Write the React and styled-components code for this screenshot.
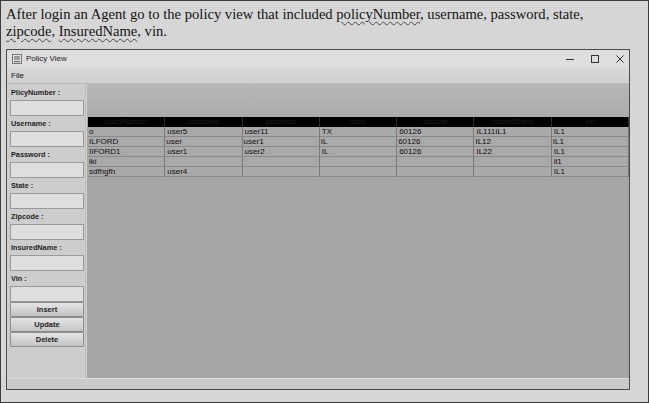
import styled, { createGlobalStyle } from "styled-components"

const GlobalStyle = createGlobalStyle`
  html, body {
    margin: 0;
    padding: 0;
    background: #d5d5d5;
  }
`

const fields = [
  "PlicyNumber :",
  "Username :",
  "Password :",
  "State :",
  "Zipcode :",
  "InsuredName :",
  "Vin :",
]

const columns = ["policyNumber", "username", "password", "state", "zipcode", "InsuredName", "vin"]

const rows = [
  ["o", "user5", "user11", "TX", "60126", "IL111IL1", "IL1"],
  ["ILFORD", "user", "user1", "IL", "60126", "IL12", "IL1"],
  ["IIFORD1", "user1", "user2", "IL", "60126", "IL22", "IL1"],
  ["lki", "", "", "", "", "", "il1"],
  ["sdfhgfh", "user4", "", "", "", "", "IL1"],
]

const Page = styled.div`
  width: 649px;
  height: 403px;
  box-sizing: border-box;
  border: 1px solid #3c3c3c;
  background: #d6d6d6;
  overflow: hidden;
  display: flex;
  flex-direction: column;
`

const Caption = styled.p`
  margin: 0;
  padding: 5px 0 0 5px;
  height: 48px;
  box-sizing: border-box;
  font-family: "Liberation Serif", serif;
  font-size: 14.6px;
  line-height: 17px;
  color: #141414;
  white-space: nowrap;
`

const Spell = styled.span`
  text-decoration: underline wavy #4a4a4a;
  text-decoration-thickness: 1px;
  text-underline-offset: 2px;
`

const Window = styled.div`
  margin-left: 5px;
  width: 624px;
  height: 341px;
  box-sizing: border-box;
  border: 1px solid #4a4a4a;
  background: #d2d2d2;
  display: flex;
  flex-direction: column;
  font-family: "Liberation Sans", Arial, sans-serif;
`

const TitleBar = styled.div`
  height: 17px;
  display: flex;
  align-items: center;
  gap: 12px;
  padding: 0 3px 0 5px;
  background: #dedede;
  font-size: 8px;
  color: #222;
`

const AppIcon = styled.svg`
  width: 10px;
  height: 10px;
  margin-right: -8px;
`

const WinTitle = styled.span`
  flex: 1;
`

const WinButton = styled.div`
  width: 13px;
  height: 17px;
  display: flex;
  align-items: center;
  justify-content: center;
`

const MenuBar = styled.div`
  height: 17px;
  display: flex;
  align-items: center;
  padding-left: 4px;
  font-size: 8px;
  color: #111;
  background: linear-gradient(#dadada, #cfcfcf);
  border-bottom: 1px solid #bdbdbd;
  box-sizing: border-box;
`

const Body = styled.div`
  flex: 1;
  display: flex;
  flex-direction: column;
`

const Main = styled.div`
  flex: 1;
  display: flex;
  gap: 1px;
`

const FormPanel = styled.div`
  width: 79px;
  box-sizing: border-box;
  padding: 1px 1px 0 3px;
  background: #cdcdcd;
  border-right: 1px solid #bcbcbc;
  display: flex;
  flex-direction: column;
`

const Label = styled.div`
  height: 15px;
  display: flex;
  align-items: center;
  padding-left: 1px;
  font-size: 7.3px;
  font-weight: bold;
  color: #1e1e1e;
`

const Input = styled.div`
  height: 16px;
  width: 74px;
  box-sizing: border-box;
  border: 1px solid #9a9a9a;
  background: #dedede;
`

const Button = styled.div`
  height: 15px;
  width: 74px;
  box-sizing: border-box;
  border: 1px solid #8c8c8c;
  border-radius: 1px;
  background: linear-gradient(#e4e4e4, #c4c4c4);
  display: flex;
  align-items: center;
  justify-content: center;
  font-size: 7.5px;
  font-weight: bold;
  color: #222;
`

const Viewport = styled.div`
  flex: 1;
  background: linear-gradient(#b6b6b6 0px, #acacac 33px, #a6a6a6 34px);
  padding: 33px 0 0 1px;
  box-sizing: border-box;
`

const Grid = styled.div`
  display: grid;
  grid-template-columns: repeat(7, 1fr);
`

const HeadCell = styled.div`
  height: 10px;
  background: #000;
  border-right: 1px solid #2c2c2c;
  color: #1e1e1e;
  font-size: 7px;
  line-height: 10px;
  text-align: center;
  overflow: hidden;
`

const Cell = styled.div`
  height: 10px;
  box-sizing: border-box;
  border-right: 1px solid #7a7a7a;
  border-bottom: 1px solid #8a8a8a;
  background: #a9a9a9;
  color: #101010;
  font-size: 8px;
  line-height: 9px;
  padding-left: ${(p) => (p.$shift ? 2 : 1)}px;
  white-space: nowrap;
  overflow: hidden;
`

const StatusStrip = styled.div`
  height: 11px;
  background: #cacaca;
  border-top: 1px solid #dcdcdc;
  box-sizing: border-box;
`

const App = () => (
  <Page>
    <GlobalStyle />
    <Caption>
      After login an Agent go to the policy view that included <Spell>policyNumber</Spell>, username, password, state,
      <br />
      <Spell>zipcode</Spell>, <Spell>InsuredName</Spell>, vin.
    </Caption>
    <Window>
      <TitleBar>
        <AppIcon viewBox="0 0 10 10">
          <rect x="0.5" y="0.5" width="9" height="9" fill="#e8e8e8" stroke="#777" />
          <rect x="2" y="2" width="6" height="4" fill="#9a9a9a" />
          <rect x="2" y="7" width="6" height="1.2" fill="#666" />
        </AppIcon>
        <WinTitle>Policy View</WinTitle>
        <WinButton>
          <svg width="8" height="8" viewBox="0 0 8 8">
            <line x1="0" y1="4.5" x2="8" y2="4.5" stroke="#333" strokeWidth="1" />
          </svg>
        </WinButton>
        <WinButton>
          <svg width="8" height="8" viewBox="0 0 8 8">
            <rect x="0.5" y="0.5" width="7" height="7" fill="none" stroke="#333" strokeWidth="1" />
          </svg>
        </WinButton>
        <WinButton>
          <svg width="8" height="8" viewBox="0 0 8 8">
            <path d="M0.5 0.5 L7.5 7.5 M7.5 0.5 L0.5 7.5" stroke="#333" strokeWidth="1" />
          </svg>
        </WinButton>
      </TitleBar>
      <MenuBar>File</MenuBar>
      <Body>
        <Main>
          <FormPanel>
            {fields.map((f) => (
              <div key={f}>
                <Label>{f}</Label>
                <Input />
              </div>
            ))}
            <Button>Insert</Button>
            <Button>Update</Button>
            <Button>Delete</Button>
          </FormPanel>
          <Viewport>
            <Grid>
              {columns.map((c) => (
                <HeadCell key={c}>{c}</HeadCell>
              ))}
              {rows.map((r, i) =>
                r.map((v, j) => (
                  <Cell key={i + "-" + j} $shift={j > 0 && i !== 1}>
                    {v}
                  </Cell>
                ))
              )}
            </Grid>
          </Viewport>
        </Main>
        <StatusStrip />
      </Body>
    </Window>
  </Page>
)

export default App
